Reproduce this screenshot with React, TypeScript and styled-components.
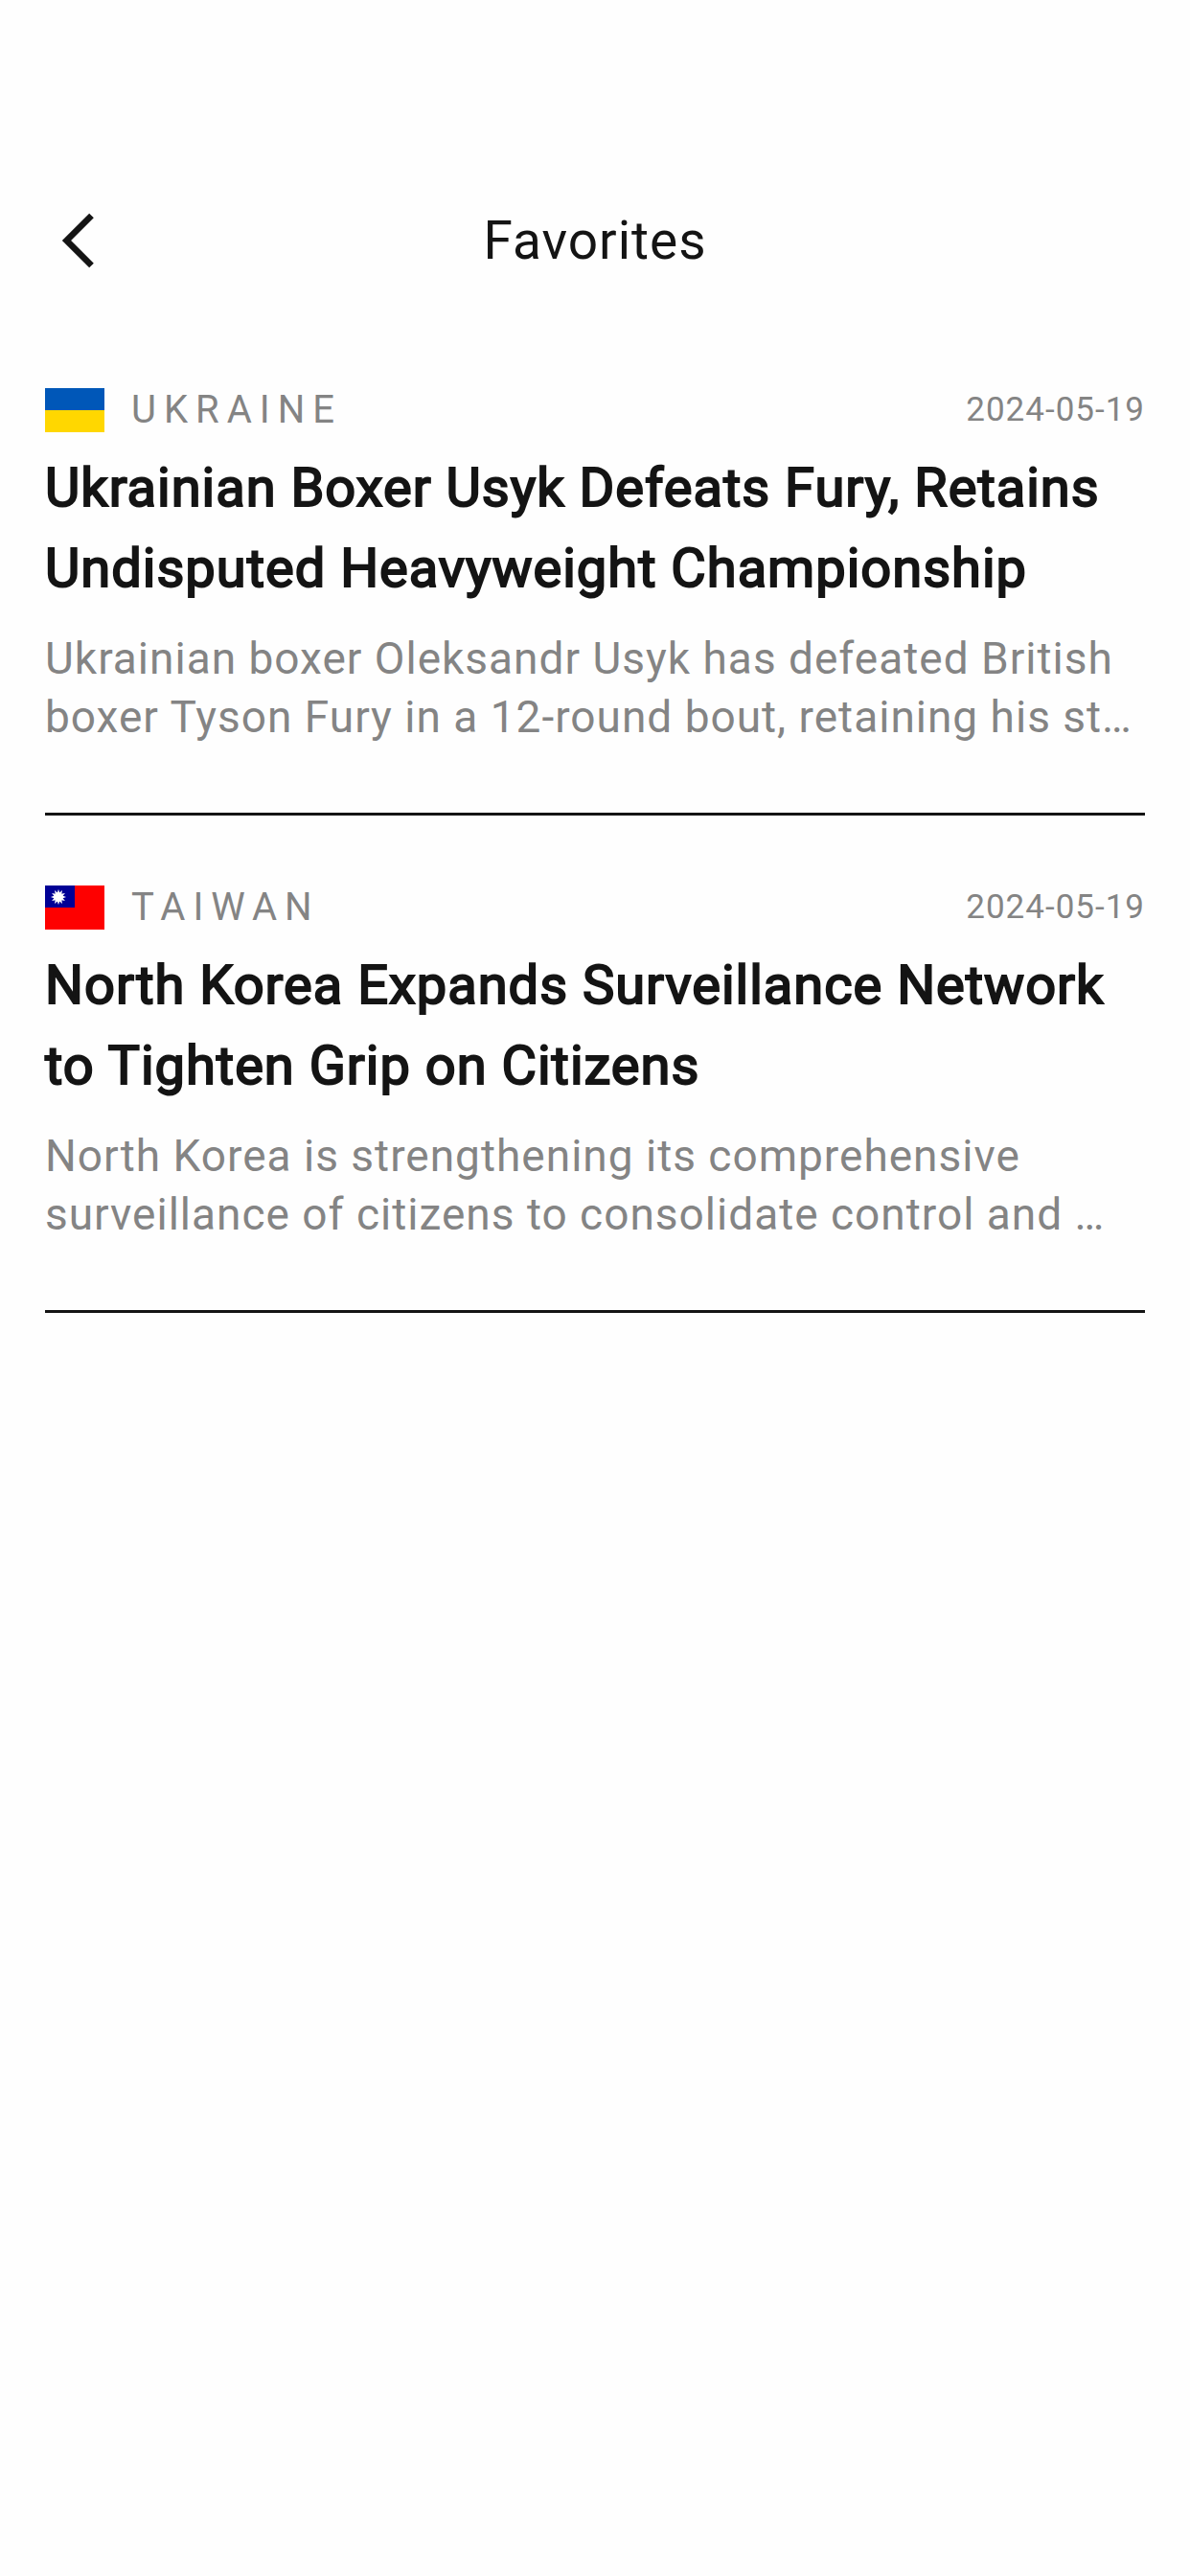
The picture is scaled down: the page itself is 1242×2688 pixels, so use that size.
import React from "react";
import styled, { createGlobalStyle } from "styled-components";

const INK = "#141414";
const MUTED = "#848484";

const GlobalStyle = createGlobalStyle`
  *, *::before, *::after { box-sizing: border-box; }
  body {
    margin: 0;
    background: #fefefe;
    color: ${INK};
    font-family: Roboto, "Noto Sans", sans-serif;
  }
`;

const Screen = styled.div`
  min-height: 100vh;
  padding: 170px 47px 0;
`;

const Header = styled.header`
  display: grid;
  grid-template-columns: 72px 1fr 72px;
  align-items: center;
  height: 162px;
`;

const BackButton = styled.button`
  display: flex;
  align-items: center;
  justify-content: center;
  width: 72px;
  height: 72px;
  padding: 0;
  border: 0;
  background: none;
  color: inherit;
  cursor: pointer;
`;

const PageTitle = styled.h1`
  margin: 0;
  font-size: 55px;
  font-weight: 400;
  line-height: 64px;
  letter-spacing: 1px;
  text-align: center;
`;

const Article = styled.article`
  padding: 73px 0 69px;
  border-bottom: 3px solid ${INK};
`;

const MetaRow = styled.div`
  display: flex;
  align-items: center;
  height: 46px;
  margin-bottom: 16px;
  color: ${MUTED};
`;

const FlagIcon = styled.svg`
  flex: none;
  width: 62px;
  height: 46px;
  margin-right: 28px;
`;

const Country = styled.span`
  flex: 1;
  font-size: 40px;
  line-height: 46px;
  letter-spacing: 8px;
  text-transform: uppercase;
`;

const DateLabel = styled.time`
  font-size: 35px;
  line-height: 46px;
  letter-spacing: 1px;
`;

const Headline = styled.h2`
  margin: 0 0 22px;
  font-size: 56px;
  font-weight: 400;
  line-height: 84px;
  letter-spacing: 1px;
  -webkit-text-stroke: 2px currentColor;
`;

const Summary = styled.p`
  margin: 0;
  color: ${MUTED};
  font-size: 46px;
  line-height: 61px;
  letter-spacing: 1px;
`;

const UkraineFlag = () => (
  <FlagIcon viewBox="0 0 62 46" role="img" aria-label="Flag of Ukraine">
    <rect width="62" height="46" fill="#ffd700" />
    <rect width="62" height="23" fill="#0057b8" />
  </FlagIcon>
);

const rayAngles = Array.from({ length: 12 }, (_, i) => i * 30);

const TaiwanFlag = () => (
  <FlagIcon viewBox="0 0 62 46" role="img" aria-label="Flag of Taiwan">
    <rect width="62" height="46" fill="#fe0000" />
    <rect width="31" height="23" fill="#000095" />
    <g transform="translate(14 12)" fill="#fff">
      {rayAngles.map((angle) => (
        <path key={angle} d="M0 -8L1.4 -4H-1.4Z" transform={`rotate(${angle})`} />
      ))}
      <circle r="4.6" />
    </g>
  </FlagIcon>
);

const stories = [
  {
    Flag: UkraineFlag,
    country: "Ukraine",
    date: "2024-05-19",
    title: "Ukrainian Boxer Usyk Defeats Fury, Retains Undisputed Heavyweight Championship",
    summary:
      "Ukrainian boxer Oleksandr Usyk has defeated British boxer Tyson Fury in a 12-round bout, retaining his st…",
  },
  {
    Flag: TaiwanFlag,
    country: "Taiwan",
    date: "2024-05-19",
    title: "North Korea Expands Surveillance Network to Tighten Grip on Citizens",
    summary:
      "North Korea is strengthening its comprehensive surveillance of citizens to consolidate control and …",
  },
];

export default function App() {
  return (
    <>
      <GlobalStyle />
      <Screen>
        <Header>
          <BackButton type="button" aria-label="Back">
            <svg width="72" height="72" viewBox="0 0 72 72" fill="none" aria-hidden="true">
              <path d="M48.5 10L22.5 36L48.5 62" stroke="currentColor" strokeWidth="6.6" />
            </svg>
          </BackButton>
          <PageTitle>Favorites</PageTitle>
        </Header>
        <main>
          {stories.map(({ Flag, country, date, title, summary }) => (
            <Article key={title}>
              <MetaRow>
                <Flag />
                <Country>{country}</Country>
                <DateLabel dateTime={date}>{date}</DateLabel>
              </MetaRow>
              <Headline>{title}</Headline>
              <Summary>{summary}</Summary>
            </Article>
          ))}
        </main>
      </Screen>
    </>
  );
}
